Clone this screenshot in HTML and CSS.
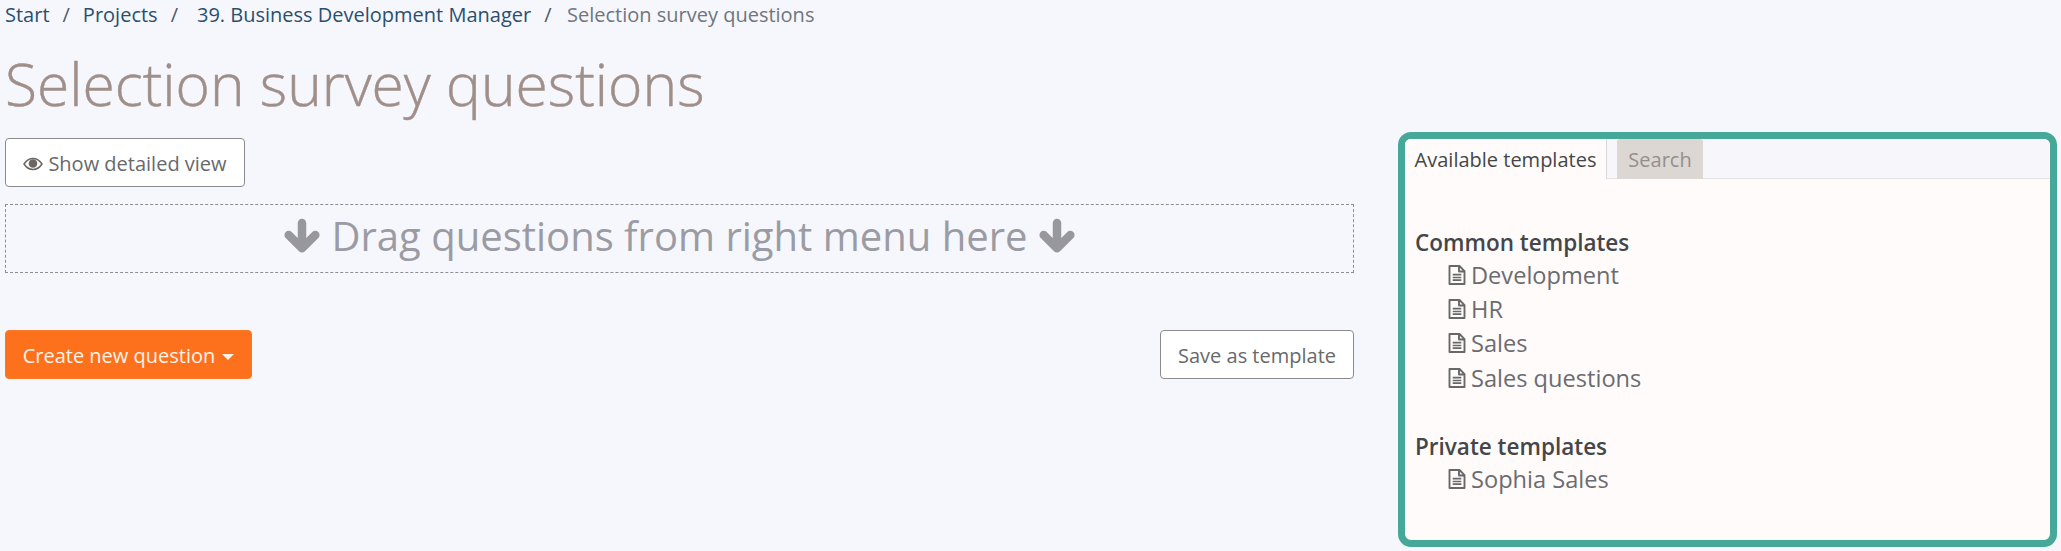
FILE: index.html
```html
<!DOCTYPE html>
<html lang="en">
<head>
<meta charset="utf-8">
<title>Selection survey questions</title>
<link rel="stylesheet" href="styles.css">
</head>
<body>
<svg class="defs" width="0" height="0" aria-hidden="true">
  <symbol id="i-file" viewBox="0 0 18 20">
    <path d="M1.500 1h10l5 5.200v12.800H1.500z M11 1v5.500h5.500" fill="none" stroke="currentColor" stroke-width="1.900" stroke-linejoin="round"/>
    <path d="M4.700 9.700h8.600M4.700 12.500h8.600M4.700 15.200h8.600" fill="none" stroke="currentColor" stroke-width="1.700"/>
  </symbol>
  <symbol id="i-arrow" viewBox="0 0 36 36">
    <path d="M18 5v24M4.700 17l13.300 13.300 13.300-13.300" fill="none" stroke="currentColor" stroke-width="8.500" stroke-linecap="round" stroke-linejoin="round"/>
  </symbol>
</svg>
<div class="page">
  <main class="main">
    <nav class="crumbs">
      <a class="crumb">Start</a><span class="sep">/</span>
      <a class="crumb">Projects</a><span class="sep sep-wide">/</span>
      <a class="crumb">39. Business Development Manager</a><span class="sep sep-last">/</span>
      <span class="current">Selection survey questions</span>
    </nav>
    <h1 class="title">Selection survey questions</h1>
    <button class="btn btn-view">
      <svg class="eye" viewBox="0 0 20 14" aria-hidden="true">
        <path d="M1 7c2.300-3.500 5.300-5.500 9-5.500s6.700 2 9 5.500c-2.300 3.500-5.300 5.500-9 5.500S3.300 10.500 1 7z" fill="none" stroke="currentColor" stroke-width="1.500"/>
        <circle cx="10" cy="6.500" r="4.300" fill="currentColor"/>
      </svg>Show detailed view
    </button>
    <div class="dropzone">
      <svg class="arrow"><use href="#i-arrow"/></svg>
      <span>Drag questions from right menu here</span>
      <svg class="arrow"><use href="#i-arrow"/></svg>
    </div>
    <div class="actions">
      <button class="btn btn-create">Create new question<i class="caret"></i></button>
      <button class="btn btn-save">Save as template</button>
    </div>
  </main>
  <aside class="panel">
    <div class="tabs">
      <div class="tab tab-active">Available templates</div>
      <div class="tab tab-idle">Search</div>
    </div>
    <div class="lists">
      <section class="group">
        <h2 class="group-title">Common templates</h2>
        <div class="item"><svg class="file"><use href="#i-file"/></svg>Development</div>
        <div class="item"><svg class="file"><use href="#i-file"/></svg>HR</div>
        <div class="item"><svg class="file"><use href="#i-file"/></svg>Sales</div>
        <div class="item"><svg class="file"><use href="#i-file"/></svg>Sales questions</div>
      </section>
      <section class="group">
        <h2 class="group-title">Private templates</h2>
        <div class="item"><svg class="file"><use href="#i-file"/></svg>Sophia Sales</div>
      </section>
    </div>
  </aside>
</div>
</body>
</html>
```

FILE: styles.css
```css
* { box-sizing: border-box; }
html, body { margin: 0; height: 100%; }
body {
  background: #f6f7fd;
  font-family: "Open Sans", "Liberation Sans", sans-serif;
  overflow: hidden;
}
.defs { display: block; height: 0; }
.page {
  display: flex;
  align-items: flex-start;
  padding-left: 5px;
}
.main { width: 1349px; }
.crumbs {
  display: flex;
  height: 28px;
  align-items: center;
  font-size: 20px;
  white-space: nowrap;
}
.crumb { color: #2a4f6e; }
.sep { color: #4c5a66; margin: 0 13px; }
.sep-wide { margin-right: 19px; }
.sep-last { margin-right: 15.500px; }
.current { color: #6f767c; }
.title {
  margin: 11px 0 11px;
  height: 88px;
  font-size: 58.700px;
  line-height: 88px;
  font-weight: 300;
  color: #a08f89;
  -webkit-text-stroke: 0.5px #a08f89;
  white-space: nowrap;
}
.btn {
  display: flex;
  align-items: center;
  justify-content: center;
  height: 49px;
  padding: 2px 0 0;
  font-family: inherit;
  font-size: 20px;
  border-radius: 4px;
  background: #fff;
  color: #68696b;
  border: 1px solid #8b8b8b;
  white-space: nowrap;
}
.btn-view { width: 240px; }
.eye { width: 20px; height: 14px; margin-right: 5px; color: #6b6663; }
.dropzone {
  display: flex;
  align-items: center;
  justify-content: center;
  height: 69px;
  margin-top: 17px;
  padding-bottom: 6px;
  border: 1px dashed #8e8f93;
  font-size: 40px;
  color: #9b9ca3;
  gap: 11px;
  white-space: nowrap;
}
.arrow { width: 36px; height: 36px; color: #97979c; }
.actions {
  display: flex;
  justify-content: space-between;
  margin-top: 57px;
}
.btn-create {
  width: 247px;
  background: #fd711d;
  color: #fff4ea;
  border: 1px solid #fb7a2a;
}
.caret {
  display: block;
  margin: 2px 0 0 7px;
  border-top: 6px solid #fff4ea;
  border-left: 6px solid transparent;
  border-right: 6px solid transparent;
}
.btn-save { width: 194px; }
.panel {
  width: 659px;
  height: 415px;
  margin: 132px 0 0 44px;
  border: 7px solid #46a898;
  border-radius: 13px;
  background: #fffbfa;
  overflow: hidden;
}
.tabs {
  display: flex;
  height: 40px;
  background: #f6f6fb;
  border-bottom: 1px solid #e3e2e2;
}
.tab {
  height: 40px;
  display: flex;
  align-items: center;
  justify-content: center;
  font-size: 20px;
}
.tab-active {
  width: 202px;
  background: #fffbfa;
  color: #454648;
  border-right: 1px solid #d9d9d9;
}
.tab-idle {
  width: 86px;
  margin-left: 10px;
  background: #dcd7d3;
  color: #948f8d;
  border-radius: 3px 3px 0 0;
}
.lists { padding: 47.500px 0 0 10px; }
.group + .group { margin-top: 36.500px; }
.group-title {
  margin: 0;
  font-size: 22.500px;
  line-height: 31px;
  font-weight: 600;
  color: #45464a;
}
.item {
  display: flex;
  align-items: center;
  height: 34.300px;
  padding-left: 33px;
  font-size: 23.600px;
  color: #6b6c70;
}
.file { width: 18px; height: 20px; margin-right: 5px; color: #68686a; }
```
